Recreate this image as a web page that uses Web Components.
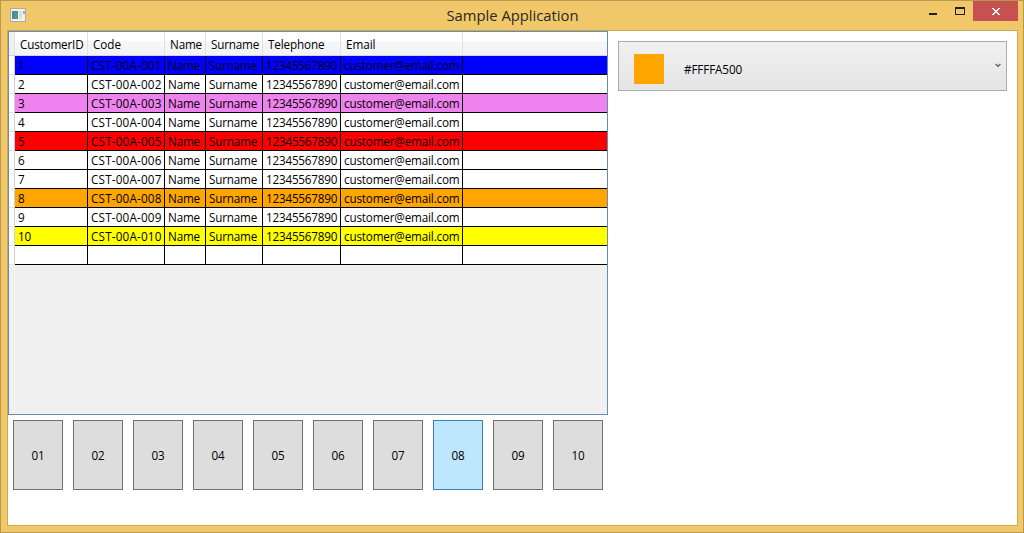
<!DOCTYPE html>
<html lang="en">
<head>
<meta charset="utf-8">
<title>Sample Application</title>
<style>
  html, body { margin: 0; height: 100%; overflow: hidden; }
  body { font: 11.7px/16px "Open Sans", "Noto Sans", sans-serif; color: #000; }
</style>
</head>
<body>
<app-window caption="Sample Application">
  <customer-grid></customer-grid>
  <number-bar slot="buttons" count="10" active="8"></number-bar>
  <color-combo slot="side" color="#FFA500" label="#FFFFA500"></color-combo>
</app-window>

<script>
// Single line of text, tracked so that it takes exactly `width` pixels.
class FitText extends HTMLElement {
  connectedCallback() {
    this.attachShadow({ mode: 'open' });
    this.shadowRoot.innerHTML = `
      <style>
        :host { display: block; white-space: nowrap; }
        span { display: inline-block; }
      </style>
      <span>${this.getAttribute('text')}</span>`;
    const span = this.shadowRoot.querySelector('span');
    const width = parseFloat(this.getAttribute('width'));
    const natural = span.getBoundingClientRect().width;
    span.style.letterSpacing = `${(width - natural) / this.getAttribute('text').length}px`;
  }
}

class AppWindow extends HTMLElement {
  connectedCallback() {
    this.attachShadow({ mode: 'open' });
    this.shadowRoot.innerHTML = `
      <style>
        :host {
          display: flex; flex-direction: column; box-sizing: border-box;
          width: 1024px; height: 533px; padding: 0 5px 6px 6px;
          background: #f0c869; border: 1px solid #b9994d;
        }
        header { display: flex; height: 29px; flex: none; }
        .left, .right { width: 200px; display: flex; }
        .left svg { margin: 7px 0 0 3px; }
        .title {
          flex: 1; display: flex; justify-content: center;
          font-size: 14.8px; line-height: 20px; padding-top: 4px; color: #2b2820;
        }
        .right { justify-content: flex-end; }
        .right svg { flex: none; }
        main {
          flex: 1; display: flex; min-height: 0;
          background: #fff; border: 1px solid #cba957;
        }
        .grid { width: 600px; }
        .side { flex: 1; padding: 10px; }
      </style>
      <header>
        <div class="left">
          <svg width="16" height="14" viewBox="0 0 16 14" shape-rendering="crispEdges">
            <rect width="16" height="14" fill="#b5ab9c"/>
            <rect x="1" y="1" width="14" height="12" fill="#f0f1f3"/>
            <rect x="2" y="3" width="6" height="8" fill="#4b9a86"/>
            <rect x="2" y="3" width="2" height="8" fill="#5585a5"/>
            <rect x="9" y="3" width="3" height="8" fill="#dedede"/>
            <rect x="13" y="3" width="2" height="3" fill="#aaa2d0"/>
          </svg>
        </div>
        <div class="title"><fit-text text="${this.getAttribute('caption')}" width="132"></fit-text></div>
        <div class="right">
          <svg width="95" height="20" viewBox="0 0 95 20" shape-rendering="crispEdges">
            <rect x="6" y="12" width="8" height="2" fill="#222"/>
            <path d="M32 6h10v8h-10zM33 8v5h8v-5z" fill="#222" fill-rule="evenodd"/>
            <rect x="50" width="45" height="20" fill="#c75050"/>
            <path d="M69 7h2v1h1v1h2v-1h1v-1h2v1h-1v1h-1v1h-1v1h1v1h1v1h1v1h-2v-1h-1v-1h-2v1h-1v1h-2v-1h1v-1h1v-1h1v-1h-1v-1h-1v-1h-1z" fill="#fff"/>
          </svg>
        </div>
      </header>
      <main>
        <div class="grid"><slot></slot><slot name="buttons"></slot></div>
        <div class="side"><slot name="side"></slot></div>
      </main>`;
  }
}

class CustomerGrid extends HTMLElement {
  connectedCallback() {
    const colors = { 1: '#0000ff', 3: '#ee82ee', 5: '#ff0000', 8: '#ffa500', 10: '#ffff00' };
    // [header, header text width, cell value, cell text width]
    const columns = [
      ['CustomerID', 63.5, n => n, 0],
      ['Code', 28, n => `CST-00A-${String(n).padStart(3, '0')}`, 70.5],
      ['Name', 32, () => 'Name', 32],
      ['Surname', 48, () => 'Surname', 48],
      ['Telephone', 56.5, () => '12345567890', 71.2],
      ['Email', 29.5, () => 'customer@email.com', 115.5],
    ];
    const heads = columns.map(c => `<div><fit-text text="${c[0]}" width="${c[1]}"></fit-text></div>`).join('');
    let rows = '';
    for (let n = 1; n <= 11; n++) {
      const cells = columns.map(c => {
        if (n === 11) { return '<div></div>'; }
        const text = String(c[2](n));
        return `<div><fit-text text="${text}" width="${c[3] || text.length * 6.5}"></fit-text></div>`;
      }).join('');
      rows += `<div class="row" style="background:${colors[n] || '#fff'}"><i></i>${cells}<div></div></div>`;
    }

    this.attachShadow({ mode: 'open' });
    this.shadowRoot.innerHTML = `
      <style>
        :host {
          display: block; box-sizing: border-box; height: 384px;
          background: #f0f0f0; border: 1px solid #688caf;
        }
        .head, .row {
          display: grid;
          grid-template-columns: 6px 73px 77px 41px 57px 78px 122px 1fr;
        }
        .head {
          height: 24px; box-sizing: border-box; border-bottom: 1px solid #d5d5d5;
          background: linear-gradient(#fff 40%, #f7f8fa 40%, #f1f2f4);
        }
        .head > * { border-right: 1px solid #dfe1e4; padding: 4px 0 0 5px; }
        .head > :last-child { border: 0; }
        .head > i { padding: 0; background: #f0f0f0; }
        .row { height: 19px; }
        .row > div {
          box-sizing: border-box; min-width: 0; padding: 1px 0 0 3px;
          border-right: 1px solid #000; border-bottom: 1px solid #000;
        }
        .row > :last-child { border-right: 0; }
        .row > i { background: #fff; border-right: 1px solid #d0d0d0; border-bottom: 1px solid #e5e5e5; }
      </style>
      <div class="head"><i></i>${heads}<div></div></div>
      ${rows}`;
  }
}

class NumberBar extends HTMLElement {
  connectedCallback() {
    const count = parseInt(this.getAttribute('count'), 10);
    const active = parseInt(this.getAttribute('active'), 10);
    let buttons = '';
    for (let n = 1; n <= count; n++) {
      buttons += `<button class="${n === active ? 'active' : ''}"><fit-text text="${String(n).padStart(2, '0')}" width="13"></fit-text></button>`;
    }
    this.attachShadow({ mode: 'open' });
    this.shadowRoot.innerHTML = `
      <style>
        :host { display: flex; gap: 10px; padding: 5px; }
        button {
          width: 50px; height: 70px; padding: 0; font: inherit; color: #000;
          display: flex; align-items: center; justify-content: center;
          background: #ddd; border: 1px solid #707070;
        }
        .active { background: #bee6fd; border-color: #3c7fb1; }
      </style>
      ${buttons}`;
  }
}

class ColorCombo extends HTMLElement {
  connectedCallback() {
    this.attachShadow({ mode: 'open' });
    this.shadowRoot.innerHTML = `
      <style>
        :host {
          display: flex; box-sizing: border-box; height: 50px;
          background: linear-gradient(#f0f0f0, #e5e5e5); border: 1px solid #acacac;
        }
        .swatch { width: 30px; height: 30px; margin: 12px 20px 0 15px; background: ${this.getAttribute('color')}; }
        fit-text { flex: 1; margin-top: 19px; }
        svg { margin: 21px 5px 0 0; }
      </style>
      <div class="swatch"></div>
      <fit-text text="${this.getAttribute('label')}" width="58"></fit-text>
      <svg width="6" height="5" viewBox="0 0 6 5"><path d="M.6 1 3 3.3 5.4 1" fill="none" stroke="#606060" stroke-width="1.3"/></svg>`;
  }
}

customElements.define('fit-text', FitText);
customElements.define('app-window', AppWindow);
customElements.define('customer-grid', CustomerGrid);
customElements.define('number-bar', NumberBar);
customElements.define('color-combo', ColorCombo);
</script>
</body>
</html>
